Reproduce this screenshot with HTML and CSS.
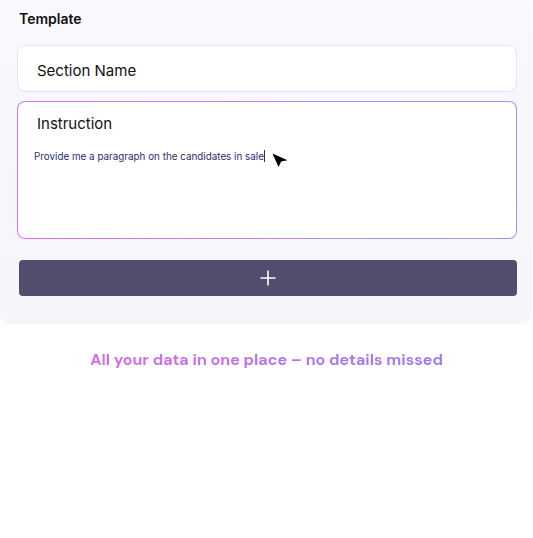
FILE: index.html
```html
<!DOCTYPE html>
<html>
<head>
<meta charset="utf-8">
<link rel="stylesheet" href="styles.css">
</head>
<body>
<div class="panel">
  <div class="title">Template</div>
  <div class="field">Section Name</div>
  <div class="instr-wrap">
    <div class="instr">
      <div class="instr-label">Instruction</div>
      <div class="instr-text">Provide me a paragraph on the candidates in sale<span class="caret"></span>
        <svg class="pointer" width="18" height="16" viewBox="0 0 18 16"><path d="M0.5 0.5 L15.5 7.3 L9.2 8.6 L6.5 14 Z" fill="#000"/></svg>
      </div>
    </div>
  </div>
  <div class="add-btn">
    <svg width="18" height="18" viewBox="0 0 18 18"><path d="M9 1.5 V16.5 M1.5 9 H16.5" stroke="#fff" stroke-width="1.6"/></svg>
  </div>
</div>
<div class="tagline">All your data in one place – no details missed</div>
</body>
</html>
```
FILE: styles.css
```css
html, body { margin: 0; padding: 0; background: #fff; }
body { width: 533px; height: 538px; overflow: hidden; font-family: Inter, "Noto Sans", sans-serif; }
.panel {
  width: 532px;
  margin-top: -8px;
  padding: 17px 15px 28px 17px;
  box-sizing: border-box;
  background: linear-gradient(#f9f9fd, #f5f5fa);
  border-radius: 0 0 10px 10px;
}
.title { font-size: 14px; font-weight: 600; color: #111; margin-left: 2px; line-height: 20px; }
.field {
  margin-top: 16px;
  height: 47px;
  box-sizing: border-box;
  background: #fff;
  border: 1px solid #e4e2f6;
  border-radius: 8px;
  padding: 3px 0 0 19px;
  display: flex; align-items: center;
  font-size: 15px; color: #111;
}
.instr-wrap {
  margin-top: 9px;
  padding: 1px;
  border-radius: 8px;
  background: linear-gradient(90deg, #dc72ee, #9d94f6);
}
.instr {
  background: #fff;
  border-radius: 7px;
  height: 136px;
  box-sizing: border-box;
  padding: 13px 16px 0 16px;
}
.instr-label { font-size: 15px; color: #111; margin-left: 3px; line-height: 18px; }
.instr-text { margin-top: 17px; font-size: 9.85px; color: #2b2d6e; position: relative; line-height: 12px; }
.caret { display: inline-block; width: 1px; height: 12px; background: #2b2d6e; vertical-align: -2px; }
.pointer { position: absolute; left: 238px; top: 3px; }
.add-btn {
  margin: 21px 0 0 2px;
  height: 36px;
  background: #524d6d;
  border-radius: 4px;
  display: flex; align-items: center; justify-content: center;
}
.tagline {
  text-align: center;
  margin-top: 25px;
  font-size: 16px;
  font-weight: 700;
  font-family: "DM Sans", Lato, sans-serif;
  background: linear-gradient(90deg, #da68e8, #9b7af2);
  background-clip: text;
  -webkit-background-clip: text;
  color: transparent;
  width: max-content;
  margin-left: auto; margin-right: auto;
}
```
